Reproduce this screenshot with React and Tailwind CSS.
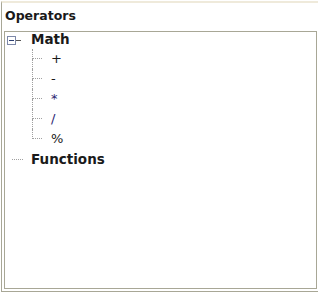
const dot = "border-dotted border-[#a0a0a0]";

function Child({ label, color, last }) {
  return (
    <div className="flex h-[20px]">
      <div className="w-[10px] flex flex-col">
        <div className={`h-[10px] border-l border-b ${dot}`} />
        <div className={`flex-1 ${last ? "" : `border-l ${dot}`}`} />
      </div>
      <div className={`ml-[9px] flex items-center text-[13px] ${color}`}>{label}</div>
    </div>
  );
}

export default function App() {
  const items = [
    { t: "+", c: "text-[#1a1a1a]" },
    { t: "-", c: "text-[#1a1a1a]" },
    { t: "*", c: "text-[#2a2470]" },
    { t: "/", c: "text-[#2a2470]" },
    { t: "%", c: "text-[#1a1a1a]" },
  ];
  return (
    <div className="w-[318px] h-[293px] bg-white" style={{ fontFamily: '"DejaVu Sans", Verdana, sans-serif' }}>
      <div className="ml-[1px] pt-[1px] h-[292px] flex flex-col">
        <div className="flex-1 flex flex-col border-l border-t-2 border-b border-l-[#a8a796] border-t-[#efeadb] border-b-[#a8a796]">
          <div className="h-[28px] pl-[3px] pt-[4px] text-[12.5px] font-bold text-[#1a1a1a]">Operators</div>
          <div className="ml-[2px] mr-[1px] mb-[2px] flex-1 border border-[#a8a796] flex flex-col">
            <div className="h-[17px] flex items-center">
              <div className="ml-[2px] w-[9px] h-[9px] border border-[#7d88a8] bg-white flex items-center justify-center">
                <div className="w-[5px] h-[1px] bg-[#2c3e70]" />
              </div>
              <div className="w-[5px] border-t border-[#555]" />
              <div className="ml-[10px] mb-[2px] text-[13.5px] font-bold text-[#1a1a1a]">Math</div>
            </div>
            <div className="ml-[27px] flex flex-col">
              {items.map((it, i) => (
                <Child key={i} label={it.t} color={it.c} last={i === items.length - 1} />
              ))}
            </div>
            <div className="h-[20px] flex items-center">
              <div className={`ml-[7px] w-[11px] border-t ${dot}`} />
              <div className="ml-[8px] text-[13.5px] font-bold text-[#1a1a1a]">Functions</div>
            </div>
          </div>
        </div>
      </div>
    </div>
  );
}
